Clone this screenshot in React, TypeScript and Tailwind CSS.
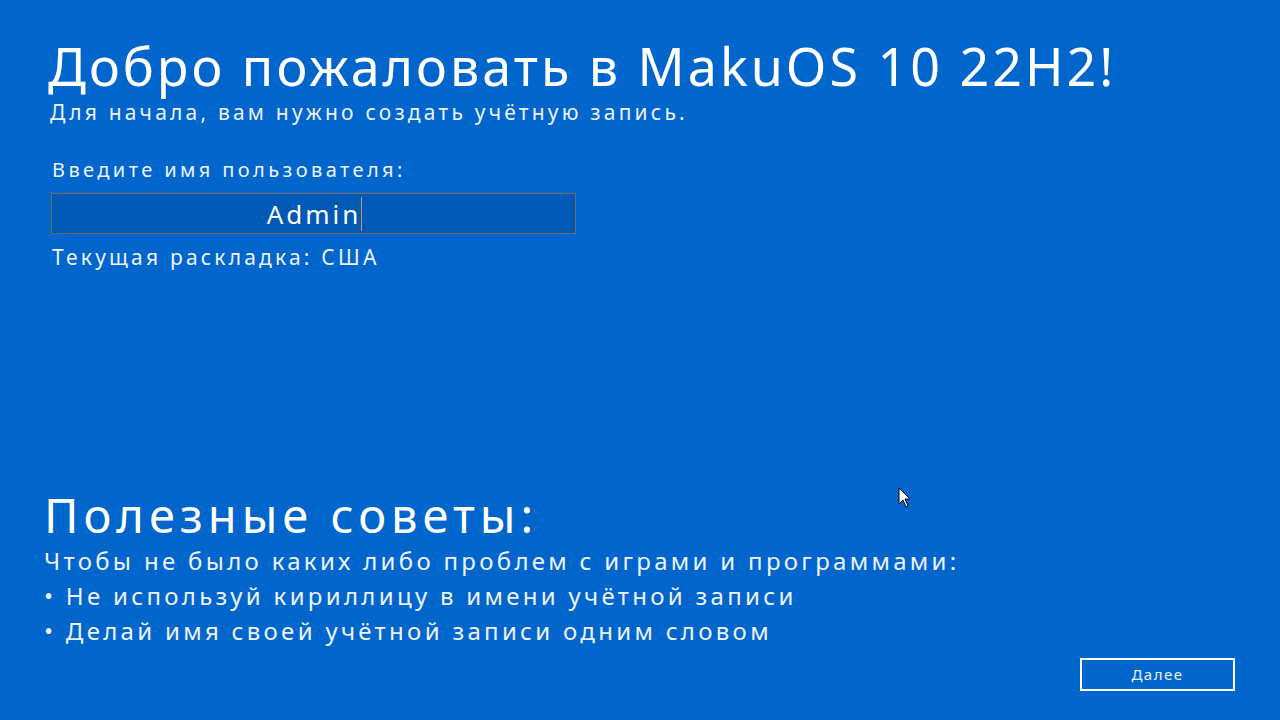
import React from 'react';

function Cursor() {
  return (
    <svg width="14" height="22" viewBox="0 0 14 22" className="absolute left-[898px] top-[487px]">
      <path d="M1 1 L1 17 L5 13 L8 20 L10 19 L7 12 L12 12 Z" fill="#ffffff" stroke="#000000" strokeWidth="1" strokeLinejoin="round" />
    </svg>
  );
}

export default function App() {
  return (
    <div className="relative w-[1280px] h-[720px] bg-[#0066cc] text-white overflow-hidden font-['Noto_Sans','Open_Sans',sans-serif]">
      <div className="flex flex-col h-full">
        {/* Header */}
        <div className="pl-[48px] pt-[36px]">
          <h1 className="text-[52px] leading-[60px] tracking-[3px]">Добро пожаловать в MakuOS 10 22H2!</h1>
          <p className="mt-[4px] text-[21px] leading-[24px] ml-[2px] tracking-[3.2px] text-[#eef2ff]">Для начала, вам нужно создать учётную запись.</p>
        </div>

        {/* Form */}
        <div className="pl-[52px] pt-[32px] flex flex-col">
          <label className="text-[20px] leading-[28px] tracking-[3.4px] text-[#eef2ff]">Введите имя пользователя:</label>
          <div className="mt-[9px] -ml-[1px] w-[525px] h-[41px] bg-[#0059b4] border border-[#6f6a62] flex items-center justify-center">
            <span className="text-[26px] leading-[30px] tracking-[3px] pl-[2px]">Admin</span>
            <span className="w-[1px] h-[34px] bg-[#c8a040]"></span>
          </div>
          <p className="mt-[9px] text-[21px] leading-[28px] tracking-[3.2px] text-[#eef2ff]">Текущая раскладка: США</p>
        </div>

        {/* Tips */}
        <div className="mt-auto pl-[44px] pb-[72px]">
          <h2 className="text-[47px] leading-[56px] tracking-[5px] -mt-[2px]">Полезные советы:</h2>
          <div className="text-[24px] leading-[35px] tracking-[3.3px] text-[#eef2ff]">
            <p>Чтобы не было каких либо проблем с играми и программами:</p>
            <p>• Не используй кириллицу в имени учётной записи</p>
            <p>• Делай имя своей учётной записи одним словом</p>
          </div>
        </div>
      </div>

      {/* Next button */}
      <div className="absolute left-[1080px] top-[658px]">
        <button className="w-[155px] h-[33px] border-2 border-white text-[15px] tracking-[1.5px] text-[#eef2ff] flex items-center justify-center">Далее</button>
      </div>

      <Cursor />
    </div>
  );
}
